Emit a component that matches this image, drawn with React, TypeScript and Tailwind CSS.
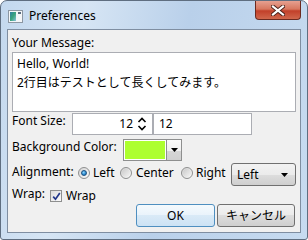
import type { ReactNode } from 'react';

function Radio({ checked }: { checked?: boolean }) {
  return (
    <span className="flex h-[12px] w-[12px] shrink-0 items-center justify-center rounded-full border border-[#8e8f8f] bg-gradient-to-br from-[#d4d4d4] to-[#fbfbfb]">
      {checked ? (
        <span className="h-[6px] w-[6px] rounded-full border border-[#1c5180] bg-[radial-gradient(circle_at_40%_35%,#8ad6ff,#1e7cc4_70%)]" />
      ) : (
        <span className="h-[8px] w-[8px] rounded-full bg-gradient-to-br from-[#cbcbcb] to-[#f4f4f4]" />
      )}
    </span>
  );
}

function Button({ children, primary, className }: { children: ReactNode; primary?: boolean; className?: string }) {
  return (
    <div
      className={`flex h-[23px] items-center rounded-[3px] border ${
        primary
          ? 'border-[#4f8fc0] bg-[linear-gradient(#f5fafd_0%,#e9f3fb_50%,#d9eaf7_50%,#cce2f4_100%)]'
          : 'border-[#707070] bg-[linear-gradient(#f2f2f2_0%,#ebebeb_50%,#dddddd_50%,#cfcfcf_100%)]'
      } ${className ?? ''}`}
    >
      {children}
    </div>
  );
}

export default function App() {
  return (
    <div
      className="h-[240px] w-[308px] overflow-hidden bg-white text-[12px] leading-[16px] text-black"
      style={{ fontFamily: '"Noto Sans", "Noto Sans CJK JP", sans-serif' }}
    >
      <div className="flex h-full w-full flex-col rounded-t-[7px] rounded-b-[3px] border border-[#5f6e80] bg-[linear-gradient(100deg,#c3d8ee_0%,#d6e5f4_25%,#b9d0ea_55%,#c7dbf0_100%)]">
        {/* title bar */}
        <div className="flex h-[28px] shrink-0 items-start justify-between">
          <div className="flex items-center pl-[7px] pt-[7px]">
            <svg width="15" height="13" viewBox="0 0 15 13">
              <rect x="0.5" y="0.5" width="14" height="12" fill="#f4f6f8" stroke="#8c97a3" />
              <rect x="2" y="2" width="6" height="9" fill="url(#ic)" />
              <rect x="10" y="2" width="3" height="2" fill="#5b6d80" />
              <defs>
                <linearGradient id="ic" x1="0" y1="0" x2="1" y2="1">
                  <stop offset="0" stopColor="#2f7fa8" />
                  <stop offset="0.5" stopColor="#3aa37a" />
                  <stop offset="1" stopColor="#8ac4e0" />
                </linearGradient>
              </defs>
            </svg>
            <span className="ml-[6px] text-[12px] leading-[16px]">Preferences</span>
          </div>
          <div className="mr-[6px] flex h-[19px] w-[46px] items-center justify-center rounded-b-[4px] border border-t-0 border-[#6b2a20] bg-[linear-gradient(#e6a090_0%,#d7775f_45%,#c2402a_55%,#d0674c_100%)]">
            <svg width="14" height="11" viewBox="0 0 14 11">
              <path d="M2 1.5 L12 9.5 M12 1.5 L2 9.5" stroke="#4a2019" strokeWidth="4" strokeLinecap="square" />
              <path d="M2 1.5 L12 9.5 M12 1.5 L2 9.5" stroke="#ffffff" strokeWidth="2.2" strokeLinecap="square" />
            </svg>
          </div>
        </div>

        {/* client area */}
        <div className="mx-[6px] mb-[6px] flex flex-1 flex-col border border-[#7f8ea1] bg-[#f0f0f0] pl-[4px] pr-[4px]">
          <div className="pt-[5px] pb-[1px]">Your Message:</div>
          <div className="h-[60px] border border-[#abadb3] bg-white pl-[4px] pt-[1px] leading-[19px]">
            <div>Hello, World!</div>
            <div>2行目はテストとして長くしてみます。</div>
          </div>

          {/* font size */}
          <div className="mt-[1px] flex h-[22px] items-start">
            <div className="w-[60px] shrink-0">Font Size:</div>
            <div className="flex h-[22px] w-[81px] items-center border border-[#abadb3] bg-white">
              <span className="flex-1 pr-[4px] text-right">12</span>
              <svg width="10" height="14" viewBox="0 0 10 14" className="mr-[5px]">
                <path d="M1.5 5 L5 1.5 L8.5 5" fill="none" stroke="#000" strokeWidth="1.6" />
                <path d="M1.5 9 L5 12.5 L8.5 9" fill="none" stroke="#000" strokeWidth="1.6" />
              </svg>
            </div>
            <div className="flex h-[22px] w-[99px] items-center border border-[#abadb3] bg-white pl-[5px]">12</div>
          </div>

          {/* background color */}
          <div className="mt-[4px] flex h-[22px] items-start">
            <div className="w-[111px] shrink-0">Background Color:</div>
            <div className="h-[22px] w-[44px] border border-[#8e8f8f] bg-white p-[1px]">
              <div className="h-full w-full bg-[#adff2f]" />
            </div>
            <div className="flex h-[22px] w-[15px] items-center justify-center border border-l-0 border-[#8e8f8f] bg-[linear-gradient(#fafafa_0%,#f0f0f0_55%,#d6d6d6_55%,#d0d0d0_100%)]">
              <svg width="7" height="4" viewBox="0 0 7 4">
                <path d="M0 0 H7 L3.5 4 Z" fill="#000" />
              </svg>
            </div>
          </div>

          {/* alignment */}
          <div className="mt-[2px] flex h-[23px] items-start">
            <div className="w-[66px] shrink-0 pt-[1px]">Alignment:</div>
            <div className="flex w-[42px] items-center pt-[3px]">
              <Radio checked />
              <span className="ml-[3px] leading-[14px]">Left</span>
            </div>
            <div className="flex w-[61px] items-center pt-[3px]">
              <Radio />
              <span className="ml-[4px] leading-[14px]">Center</span>
            </div>
            <div className="flex w-[50px] items-center pt-[3px]">
              <Radio />
              <span className="ml-[3px] leading-[14px]">Right</span>
            </div>
            <Button className="w-[65px] justify-between pl-[5px] pr-[7px]">
              <span>Left</span>
              <svg width="7" height="4" viewBox="0 0 7 4">
                <path d="M0 0 H7 L3.5 4 Z" fill="#000" />
              </svg>
            </Button>
          </div>

          {/* wrap */}
          <div className="flex h-[18px] items-start">
            <div className="w-[38px] shrink-0">Wrap:</div>
            <div className="flex items-center pt-[3px]">
              <span className="flex h-[12px] w-[12px] items-center justify-center border border-[#8e8f8f] bg-gradient-to-br from-[#dcdcdc] to-[#fbfbfb]">
                <svg width="9" height="9" viewBox="0 0 9 9">
                  <path d="M1.2 4.6 L3.5 7.2 L7.8 1" fill="none" stroke="#21368a" strokeWidth="1.7" />
                </svg>
              </span>
              <span className="ml-[4px] leading-[14px]">Wrap</span>
            </div>
          </div>

          {/* buttons */}
          <div className="flex justify-end gap-[2px] pr-[1px]">
            <Button primary className="w-[79px] justify-center">OK</Button>
            <Button className="w-[78px] justify-center">キャンセル</Button>
          </div>
        </div>
      </div>
    </div>
  );
}
